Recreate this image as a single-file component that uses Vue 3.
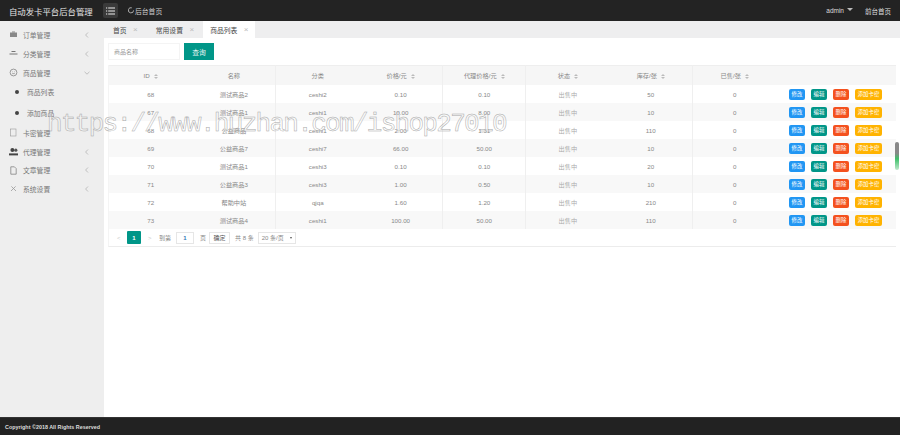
<template>
  <div class="app">
    <header class="topbar">
      <div class="logo">自动发卡平台后台管理</div>
      <div class="menu-btn">
        <svg width="9" height="8" viewBox="0 0 9 8"><path d="M0 1h1.2M2.2 1H9M0 4h1.2M2.2 4H9M0 7h1.2M2.2 7H9" stroke="#eee" stroke-width="1" fill="none" /></svg>
      </div>
      <div class="home-link">
        <svg width="6" height="7" viewBox="0 0 6 7"><path d="M3.8 .8A2.6 2.6 0 1 0 5.6 3.4" stroke="#ccc" stroke-width=".8" fill="none" /></svg>
        后台首页
      </div>
      <div class="top-right">
        <span class="admin">admin</span>
        <span class="caret"></span>
        <span class="front">前台首页</span>
      </div>
    </header>

    <div class="body">
      <aside class="sidebar">
        <div
          v-for="item in menu"
          :key="item.label"
          class="menu-item"
          :class="{ child: item.child }"
          :style="{ height: item.h + 'px' }"
        >
          <span v-if="item.child" class="dot"></span>
          <svg v-else class="menu-icon" width="9" height="9" viewBox="0 0 9 9" v-html="item.icon"></svg>
          <span class="menu-label">{{ item.label }}</span>
          <svg v-if="item.arrow" class="arrow" width="6" height="6" viewBox="0 0 6 6">
            <path :d="item.arrow === 'down' ? 'M.5 1.8 3 4.2 5.5 1.8' : 'M4 .5 1.6 3 4 5.5'" stroke="#aaa" stroke-width=".7" fill="none" />
          </svg>
        </div>
      </aside>

      <main class="main">
        <div class="tabs">
          <div class="tab">首页<span class="close">×</span></div>
          <div class="tab">常用设置<span class="close">×</span></div>
          <div class="tab active">商品列表<span class="close">×</span></div>
        </div>

        <div class="content">
          <div class="search">
            <div class="search-input">商品名称</div>
            <div class="search-btn">查询</div>
          </div>

          <div class="table-box">
            <table class="grid">
              <colgroup>
                <col v-for="n in 8" :key="n" class="data-col" />
                <col />
              </colgroup>
              <thead>
                <tr>
                  <th v-for="(h, i) in columns" :key="h">
                    {{ h }}<span v-if="sortable.includes(i)" class="sort"><i class="up"></i><i class="down"></i></span>
                  </th>
                  <th></th>
                </tr>
              </thead>
              <tbody>
                <tr v-for="(row, i) in rows" :key="i">
                  <td>{{ row[0] }}</td>
                  <td>{{ row[1] }}</td>
                  <td>{{ row[2] }}</td>
                  <td>{{ row[3] }}</td>
                  <td>{{ row[4] }}</td>
                  <td class="status">{{ row[5] }}</td>
                  <td>{{ row[6] }}</td>
                  <td>0</td>
                  <td class="actions">
                    <span class="btn blue">修改</span>
                    <span class="btn green">编辑</span>
                    <span class="btn red">删除</span>
                    <span class="btn yellow">添加卡密</span>
                  </td>
                </tr>
              </tbody>
            </table>

            <div class="pager">
              <span class="pg-prev">&lt;</span>
              <span class="pg-cur">1</span>
              <span class="pg-next">&gt;</span>
              <span class="pg-text">到第</span>
              <span class="pg-input">1</span>
              <span class="pg-page">页</span>
              <span class="pg-ok">确定</span>
              <span class="pg-total">共 8 条</span>
              <span class="pg-size">20 条/页<i></i></span>
            </div>
          </div>
        </div>
      </main>
    </div>

    <footer class="footer">Copyright ©2018 All Rights Reserved</footer>

    <div class="watermark">https://www.huzhan.com/ishop27010</div>
    <div class="scroll-mark"></div>
  </div>
</template>

<script setup>
const menu = [
  { label: '订单管理', h: 19, arrow: 'left', icon: '<rect x="1" y="2.5" width="7" height="4.5" fill="#888"/><rect x="3" y="1.5" width="3" height="1" fill="#888"/>' },
  { label: '分类管理', h: 19, arrow: 'left', icon: '<path d="M2.5 2.5h4M.5 5h8" stroke="#666" stroke-width=".9"/>' },
  { label: '商品管理', h: 19, arrow: 'down', icon: '<circle cx="4.5" cy="4.5" r="3.4" fill="none" stroke="#777" stroke-width=".7"/><path d="M3 3.8h.6M5.4 3.8H6M3.2 5.6h2.6" stroke="#777" stroke-width=".6"/>' },
  { label: '商品列表', h: 20, child: true },
  { label: '添加商品', h: 21, child: true },
  { label: '卡密管理', h: 19, icon: '<rect x="1.5" y="1" width="5.5" height="7" fill="none" stroke="#999" stroke-width=".6"/>' },
  { label: '代理管理', h: 19, arrow: 'left', icon: '<circle cx="3.4" cy="3" r="2" fill="#444"/><circle cx="6.8" cy="3.2" r="1.6" fill="#555"/><path d="M0 8.4V6.4h9v2z" fill="#444"/>' },
  { label: '文章管理', h: 18, arrow: 'left', icon: '<path d="M1.8 .8h3.6l1.8 1.8v5.6H1.8z" fill="none" stroke="#777" stroke-width=".7"/>' },
  { label: '系统设置', h: 19, arrow: 'left', icon: '<path d="M2 7 6.6 2.4M2.4 2.4 7 7" stroke="#999" stroke-width=".8"/>' }
]

const columns = ['ID', '名称', '分类', '价格/元', '代理价格/元', '状态', '库存/张', '已售/张']
// 名称 and 分类 have no sort arrows in the header
const sortable = [0, 3, 4, 5, 6, 7]

const rows = [
  ['68', '测试商品2', 'ceshi2', '0.10', '0.10', '出售中', '50'],
  ['67', '测试商品1', 'ceshi1', '10.00', '8.00', '出售中', '10'],
  ['68', '公益商品', 'ceshi1', '2.00', '1.31', '出售中', '110'],
  ['69', '公益商品7', 'ceshi7', '66.00', '50.00', '出售中', '10'],
  ['70', '测试商品1', 'ceshi3', '0.10', '0.10', '出售中', '20'],
  ['71', '公益商品3', 'ceshi3', '1.00', '0.50', '出售中', '10'],
  ['72', '帮助中站', 'qjqa', '1.60', '1.20', '出售中', '210'],
  ['73', '测试商品4', 'ceshi1', '100.00', '50.00', '出售中', '110']
]
</script>

<style>
html, body {
  margin: 0;
  overflow: hidden;
}
</style>

<style scoped>
.app {
  position: relative;
  display: flex;
  flex-direction: column;
  width: 900px;
  height: 435px;
  overflow: hidden;
  font-family: "Liberation Sans", "Noto Sans CJK SC", sans-serif;
  font-size: 7px;
  color: #666;
  background: #fff;
}

.topbar {
  display: flex;
  align-items: center;
  flex: 0 0 21px;
  background: #232323;
  color: #ddd;
}

.logo {
  width: 103px;
  padding-left: 9px;
  box-sizing: border-box;
  font-size: 8.4px;
  color: #e4e4e4;
  white-space: nowrap;
}

.menu-btn {
  display: flex;
  align-items: center;
  justify-content: center;
  width: 15px;
  height: 15px;
  border-radius: 2px;
  background: #3a3a3a;
}

.home-link {
  display: flex;
  align-items: center;
  gap: 1px;
  margin-left: 10px;
  font-size: 6.8px;
  color: #ccc;
}

.top-right {
  display: flex;
  align-items: center;
  margin-left: auto;
  padding-right: 9px;
  font-size: 6.5px;
  color: #ddd;
}

.caret {
  width: 0;
  height: 0;
  margin: 0 12px 2px 3px;
  border: 3px solid transparent;
  border-bottom: 0;
  border-top-color: #bbb;
}

.body {
  display: flex;
  flex: 1;
  min-height: 0;
}

.sidebar {
  flex: 0 0 104px;
  box-sizing: border-box;
  padding-top: 4px;
  background: #eee;
}

.menu-item {
  display: flex;
  align-items: center;
  padding: 0 14px 0 9px;
  color: #777;
  font-size: 6.8px;
}

.menu-icon {
  flex: none;
  margin-right: 5px;
}

.child {
  padding-left: 15px;
}

.dot {
  flex: none;
  width: 4px;
  height: 4px;
  margin-right: 8px;
  border-radius: 50%;
  background: #444;
}

.arrow {
  margin-left: auto;
}

.main {
  display: flex;
  flex: 1;
  flex-direction: column;
  min-width: 0;
}

.tabs {
  display: flex;
  flex: 0 0 17px;
  background: #eeeeef;
}

.tab {
  display: flex;
  align-items: center;
  padding: 0 9px;
  color: #444;
  font-size: 6.8px;
}

.tab.active {
  padding: 0 7px;
  background: #fff;
}

.close {
  margin-left: 6.5px;
  color: #bbb;
  font-size: 8px;
}

.content {
  flex: 1;
  padding: 5px 4px 0;
}

.search {
  display: flex;
  align-items: stretch;
  gap: 4px;
  height: 17px;
}

.search-input {
  display: flex;
  align-items: center;
  width: 72px;
  box-sizing: border-box;
  padding-left: 5px;
  border: 1px solid #f4f4f4;
  color: #999;
  font-size: 6px;
}

.search-btn {
  display: flex;
  align-items: center;
  justify-content: center;
  width: 30px;
  background: #009688;
  color: #e8f5f3;
  font-size: 6.8px;
}

.table-box {
  margin-top: 5px;
  border-bottom: 1px solid #ececec;
  border-left: 1px solid #f4f4f4;
}

.grid {
  width: 100%;
  border-collapse: collapse;
  table-layout: fixed;
  font-size: 6.2px;
}

.data-col {
  width: 83.4px;
}

th {
  height: 19px;
  padding: 0;
  background: #f6f6f6;
  border-top: 1px solid #eee;
  color: #888;
  font-weight: normal;
}

td {
  height: 18px;
  padding: 0;
  color: #888;
  text-align: center;
}

th:nth-child(2),
td:nth-child(2),
th:nth-child(4),
td:nth-child(4),
th:nth-child(5),
td:nth-child(5),
th:nth-child(7),
td:nth-child(7) {
  border-right: 1px solid #efefef;
}

tbody tr:nth-child(even) td {
  background: #f8f8f8;
}

.status {
  color: #aaa;
}

.sort {
  display: inline-flex;
  flex-direction: column;
  gap: 1px;
  margin-left: 4px;
  vertical-align: middle;
}

.sort i {
  width: 0;
  height: 0;
  border: 2px solid transparent;
}

.sort .up {
  border-top: 0;
  border-bottom-color: #bbb;
}

.sort .down {
  border-bottom: 0;
  border-top-color: #bbb;
}

.actions {
  padding-right: 14px;
  font-size: 0;
  text-align: right;
  white-space: nowrap;
}

.btn {
  display: inline-block;
  width: 16px;
  height: 11px;
  margin-left: 6px;
  border-radius: 2px;
  color: #fff;
  font-size: 5.4px;
  line-height: 11px;
  text-align: center;
  vertical-align: middle;
}

.blue { background: #2196f3; }
.green { background: #009688; }
.red { background: #f4511e; }
.yellow { width: 27px; background: #ffb300; }

.pager {
  display: flex;
  align-items: center;
  height: 17px;
  color: #888;
  font-size: 6px;
}

.pg-prev {
  width: 18px;
  color: #ccc;
  padding-left: 8px;
  box-sizing: border-box;
}

.pg-cur {
  display: flex;
  align-items: center;
  justify-content: center;
  width: 14px;
  height: 13px;
  border-radius: 1px;
  background: #009688;
  color: #fff;
  font-weight: bold;
}

.pg-next {
  width: 18px;
  color: #ccc;
  padding-left: 7px;
  box-sizing: border-box;
}

.pg-text {
  margin-right: 5px;
}

.pg-input {
  width: 18px;
  height: 12px;
  box-sizing: border-box;
  border: 1px solid #e6e6e6;
  color: #337ab7;
  font-weight: bold;
  line-height: 10px;
  text-align: center;
}

.pg-page {
  margin: 0 3px 0 6px;
}

.pg-ok {
  width: 21px;
  height: 12px;
  margin-right: 5px;
  box-sizing: border-box;
  border: 1px solid #e6e6e6;
  color: #555;
  line-height: 10px;
  text-align: center;
}

.pg-total {
  margin-right: 4px;
}

.pg-size {
  display: flex;
  align-items: center;
  justify-content: space-between;
  width: 38px;
  height: 12px;
  box-sizing: border-box;
  padding: 0 3px;
  border: 1px solid #e6e6e6;
}

.pg-size i {
  width: 0;
  height: 0;
  border: 1.5px solid transparent;
  border-bottom: 0;
  border-top: 2px solid #555;
}

.footer {
  display: flex;
  align-items: center;
  flex: 0 0 18px;
  padding-left: 5px;
  background: #222;
  border-top: 1px solid #333;
  box-sizing: border-box;
  color: #ddd;
  font-size: 5.4px;
  font-weight: bold;
}

.watermark {
  position: absolute;
  top: 106px;
  left: 47px;
  color: rgba(255, 255, 255, 0.3);
  -webkit-text-stroke: 0.5px #a8a8a8;
  font-family: "Liberation Mono", monospace;
  font-size: 26px;
  letter-spacing: -1.7px;
  line-height: 36px;
  white-space: nowrap;
}

.scroll-mark {
  position: absolute;
  top: 142px;
  left: 895px;
  width: 4px;
  height: 28px;
  border-radius: 2px;
  background: linear-gradient(#888 40%, #3fc06a 60%, #bfe8cc);
}
</style>
